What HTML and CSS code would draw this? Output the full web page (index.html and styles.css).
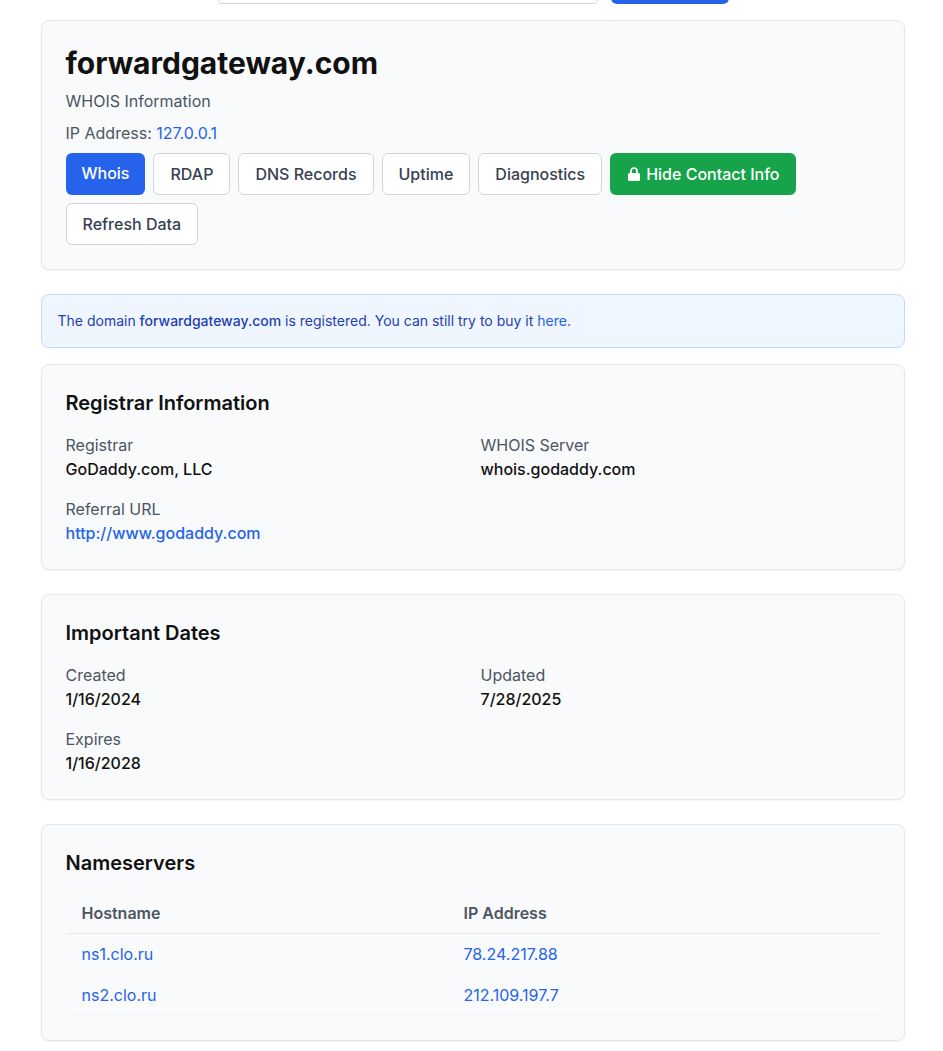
FILE: index.html
```html
<!DOCTYPE html>
<html lang="en">
<head>
    <meta charset="UTF-8">
    <meta name="viewport" content="width=device-width, initial-scale=1.0">
    <title>forwardgateway.com - WHOIS Information</title>
    <link rel="stylesheet" href="styles.css">
</head>
<body>
    <form class="search-bar">
        <input type="text" class="search-input">
        <button type="button" class="search-button"></button>
    </form>

    <main class="container">
        <section class="card domain-card">
            <h1 class="domain-name">forwardgateway.com</h1>
            <p class="subtitle">WHOIS Information</p>
            <p class="subtitle">IP Address: <a href="#">127.0.0.1</a></p>
            <div class="tabs">
                <a href="#" class="tab active">Whois</a>
                <a href="#" class="tab">RDAP</a>
                <a href="#" class="tab">DNS Records</a>
                <a href="#" class="tab">Uptime</a>
                <a href="#" class="tab">Diagnostics</a>
                <a href="#" class="tab contact">
                    <svg class="lock-icon" viewBox="0 0 16 14" aria-hidden="true">
                        <path class="lock-shackle" d="M5 7V4a3 3 0 0 1 6 0v3"/>
                        <rect x="2" y="6" width="12" height="8" rx="1.5"/>
                    </svg>
                    Hide Contact Info
                </a>
                <a href="#" class="tab">Refresh Data</a>
            </div>
        </section>

        <div class="notice">
            The domain <strong>forwardgateway.com</strong> is registered. You can still try to buy it <a href="#">here</a>.
        </div>

        <section class="card">
            <h2>Registrar Information</h2>
            <dl class="info-grid">
                <div>
                    <dt>Registrar</dt>
                    <dd>GoDaddy.com, LLC</dd>
                </div>
                <div>
                    <dt>WHOIS Server</dt>
                    <dd>whois.godaddy.com</dd>
                </div>
                <div>
                    <dt>Referral URL</dt>
                    <dd><a href="#">http://www.godaddy.com</a></dd>
                </div>
            </dl>
        </section>

        <section class="card">
            <h2>Important Dates</h2>
            <dl class="info-grid">
                <div>
                    <dt>Created</dt>
                    <dd>1/16/2024</dd>
                </div>
                <div>
                    <dt>Updated</dt>
                    <dd>7/28/2025</dd>
                </div>
                <div>
                    <dt>Expires</dt>
                    <dd>1/16/2028</dd>
                </div>
            </dl>
        </section>

        <section class="card">
            <h2>Nameservers</h2>
            <table class="ns-table">
                <thead>
                    <tr>
                        <th class="host-col">Hostname</th>
                        <th>IP Address</th>
                    </tr>
                </thead>
                <tbody>
                    <tr>
                        <td><a href="#">ns1.clo.ru</a></td>
                        <td><a href="#">78.24.217.88</a></td>
                    </tr>
                    <tr>
                        <td><a href="#">ns2.clo.ru</a></td>
                        <td><a href="#">212.109.197.7</a></td>
                    </tr>
                </tbody>
            </table>
        </section>
    </main>
</body>
</html>
```

FILE: styles.css
```css
* {
    box-sizing: border-box;
}

body {
    margin: 0;
    background-color: #fff;
    color: #111827;
    font-family: 'Inter', sans-serif;
    font-size: 16px;
    line-height: 24px;
}

a {
    color: #2563eb;
    text-decoration: none;
}

.search-bar {
    display: flex;
    justify-content: center;
    gap: 12px;
    height: 42px;
    margin-top: -38px;
    padding-left: 2px;
}

.search-input {
    width: 382px;
    border: 1px solid #d1d5db;
    border-radius: 6px;
    background-color: #fff;
}

.search-button {
    width: 118px;
    border: none;
    border-radius: 6px;
    background-color: #2563eb;
}

.container {
    width: 864px;
    margin: 16px 0 0 40.5px;
}

.card {
    margin-bottom: 24px;
    padding: 24px;
    border: 1px solid #e5e7eb;
    border-radius: 8px;
    background-color: #f9fafb;
    box-shadow: 0 1px 2px 0 rgba(0, 0, 0, 0.05);
}

.domain-name {
    margin: 0 0 8px;
    font-size: 30px;
    font-weight: 700;
    line-height: 36px;
    color: #111;
}

.subtitle {
    margin: 0 0 8px;
    color: #4b5563;
}

.tabs {
    display: flex;
    flex-wrap: wrap;
    gap: 8px;
}

.tab {
    display: inline-block;
    padding: 8px 16px;
    border: 1px solid #d1d5db;
    border-radius: 6px;
    background-color: #fff;
    color: #374151;
    font-weight: 500;
}

.tab.active {
    border: none;
    background-color: #2563eb;
    color: #fff;
}

.tab.contact {
    display: inline-flex;
    align-items: center;
    gap: 4px;
    border: none;
    background-color: #16a34a;
    color: #fff;
}

.lock-icon {
    width: 16px;
    height: 14px;
    fill: currentColor;
}

.lock-shackle {
    fill: none;
    stroke: currentColor;
    stroke-width: 1.7;
}

.notice {
    margin-bottom: 16px;
    padding: 16px;
    border: 1px solid #bfdbfe;
    border-radius: 8px;
    background-color: #eff6ff;
    color: #1e40af;
    font-size: 14px;
    line-height: 20px;
}

.notice strong {
    font-weight: 500;
}

h2 {
    margin: 0 0 16px;
    font-size: 20px;
    font-weight: 600;
    line-height: 28px;
    color: #111;
}

.info-grid {
    display: grid;
    grid-template-columns: repeat(2, 1fr);
    gap: 16px;
    margin: 0;
}

dt {
    color: #4b5563;
}

dd {
    margin: 0;
    color: #111;
    font-weight: 500;
}

.ns-table {
    width: 100%;
    border-collapse: collapse;
}

.ns-table th {
    padding: 8px 16px;
    border-bottom: 1px solid #e5e7eb;
    color: #4b5563;
    font-weight: 600;
    text-align: left;
}

.ns-table td {
    padding: 8px 16px;
    border-bottom: 1px solid #f3f4f6;
}

.host-col {
    width: 382px;
}
```
